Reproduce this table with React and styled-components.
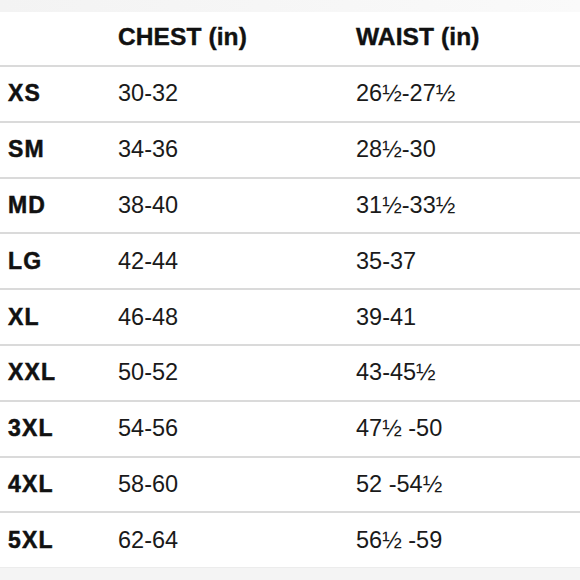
import styled, { createGlobalStyle } from "styled-components"

const GlobalStyle = createGlobalStyle`
    html, body {
        margin: 0;
        padding: 0;
        background: #ffffff;
    }
    body {
        font-family: "Liberation Sans", Arial, sans-serif;
        color: #111;
    }
`

const Page = styled.div`
    width: 580px;
    height: 580px;
    display: flex;
    flex-direction: column;
    background: #ffffff;
    overflow: hidden;
`

const TopBand = styled.div`
    height: 12px;
    background: linear-gradient(to right, #f3f3f3, #f7f7f7 60%, #fafafa);
`

const Table = styled.div`
    display: flex;
    flex-direction: column;
`

const Row = styled.div`
    display: grid;
    grid-template-columns: 110px 238px 1fr;
    align-items: center;
    box-sizing: border-box;
    height: ${(p) => (p.$head ? "53px" : "55.8px")};
    padding-left: 8px;
    border-top: ${(p) => (p.$head ? "none" : "2px solid #dadada")};
    padding-bottom: ${(p) => (p.$head ? "4px" : "0")};
`

const Size = styled.span`
    font-size: 23px;
    font-weight: bold;
    letter-spacing: 1.2px;
    -webkit-text-stroke: 0.5px #111;
`

const Head = styled.span`
    font-size: 24.5px;
    font-weight: bold;
    letter-spacing: 0.1px;
    -webkit-text-stroke: 0.4px #111;
`

const Value = styled.span`
    font-size: 23.5px;
    font-weight: normal;
    color: #1a1a1a;
`

const BottomBand = styled.div`
    flex: 1;
    background: #f4f4f4;
    border-top: 1px solid #ececec;
`

const sizes = [
    ["XS", "30-32", "26½-27½"],
    ["SM", "34-36", "28½-30"],
    ["MD", "38-40", "31½-33½"],
    ["LG", "42-44", "35-37"],
    ["XL", "46-48", "39-41"],
    ["XXL", "50-52", "43-45½"],
    ["3XL", "54-56", "47½ -50"],
    ["4XL", "58-60", "52 -54½"],
    ["5XL", "62-64", "56½ -59"],
]

export default function App() {
    return (
        <Page>
            <GlobalStyle />
            <TopBand />
            <Table>
                <Row $head>
                    <span></span>
                    <Head>CHEST (in)</Head>
                    <Head>WAIST (in)</Head>
                </Row>
                {sizes.map(([size, chest, waist]) => (
                    <Row key={size}>
                        <Size>{size}</Size>
                        <Value>{chest}</Value>
                        <Value>{waist}</Value>
                    </Row>
                ))}
            </Table>
            <BottomBand />
        </Page>
    )
}
